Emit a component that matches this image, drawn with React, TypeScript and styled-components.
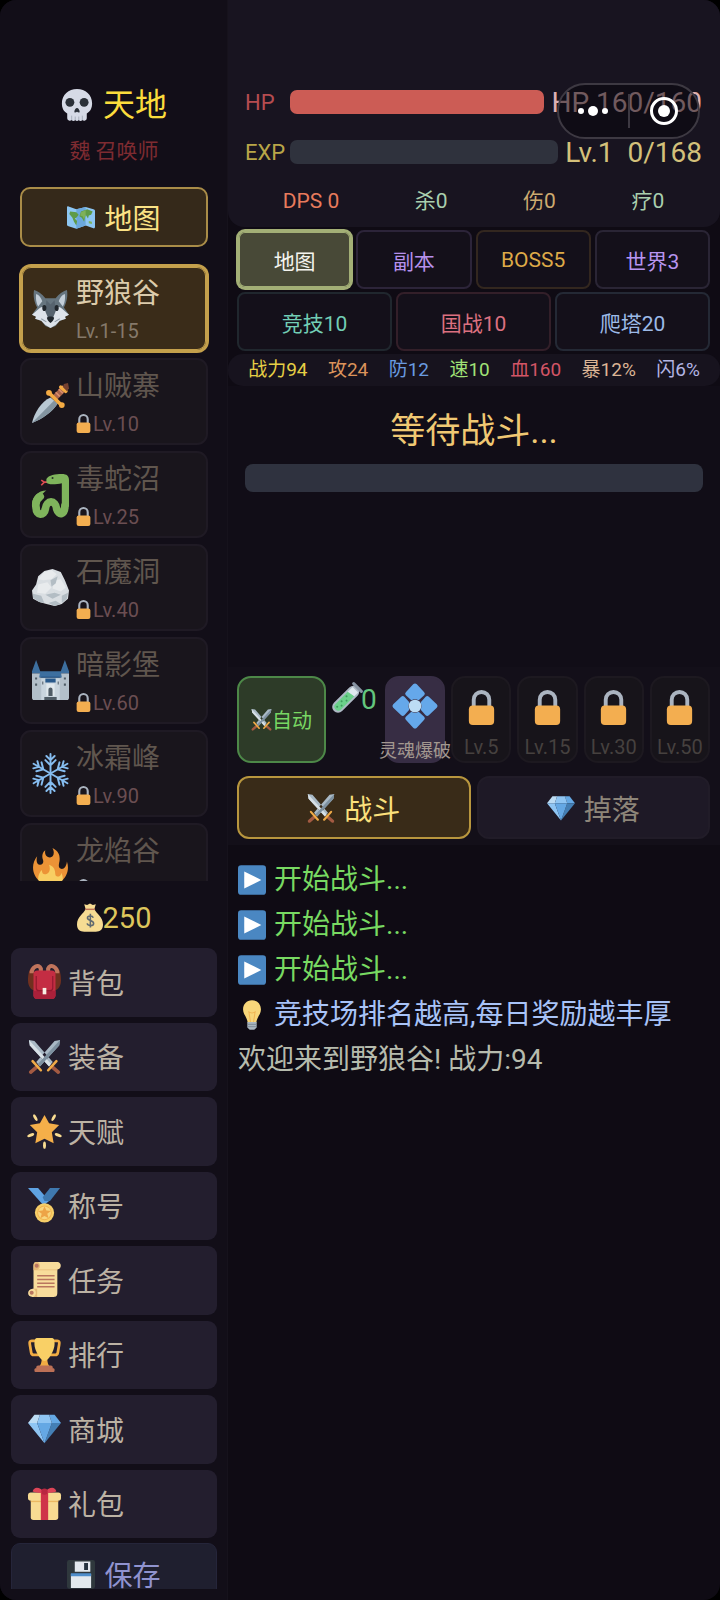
import React from 'react';
import styled, { createGlobalStyle, css } from 'styled-components';

const GlobalStyle = createGlobalStyle`
  * { box-sizing: border-box; }
  body {
    margin: 0;
    background: #000;
    font-family: Roboto, "Noto Sans CJK SC", sans-serif;
    font-weight: 400;
  }
  button {
    font: inherit;
    color: inherit;
    margin: 0;
    padding: 0;
    cursor: pointer;
  }
  h1, h2, p, ul { margin: 0; padding: 0; font-weight: 400; list-style: none; }
`;

/* ---------- icons ---------- */

const art = {
  skull: (
    <>
      <path fill="#d6dae6" d="M18 0C8.500 0 1 6.500 1 16c0 5 1.500 9 6 11.500V33a3 3 0 0 0 5 2c1 1.300 3 1.300 4 0 1 1.300 3 1.300 4 0 1 1.300 3 1.300 4 0a3 3 0 0 0 5-2v-5.500c4.500-2.500 6-6.500 6-11.500C35 6.500 27.500 0 18 0z" />
      <path stroke="#a4acb8" strokeWidth="1" d="M12 30v5M16 31v4M20 31v4M24 30v5" />
      <circle cx="10" cy="15" r="5" fill="#2b3038" />
      <circle cx="26" cy="15" r="5" fill="#2b3038" />
      <path fill="#2b3038" d="M15 25.500c0-1.500 1.500-4 3-4s3 2.500 3 4-2 1-3 0c-1 1-3 1.500-3 0z" />
    </>
  ),
  map: (
    <>
      <path fill="#8dc6f2" d="M0 6c0-1.500 1-2 2-1.500L12 8l12-3 10 3c1 .3 2 1 2 2v21c0 1-1 2-2 1.500L24 29l-12 4-10-3c-1-.3-2-1-2-2z" />
      <path fill="#6ba8dd" d="M12 8l12-3v24l-12 4z" />
      <path fill="#5f9b48" d="M4 11l8 1 3 3-3 4-2 1 3 3-1 6-3-5-2-5-4-5zm14 0l8-3 7 3-2 4-3 1-1 4-3-5-2 9-3-5-3-2z" />
      <path fill="#7eb15a" d="M18 12l6-3v6l-2 6-2-4-3-1zM28 23l4 1v3l-4-1z" />
    </>
  ),
  wolf: (
    <>
      <path fill="#66757f" d="M2 0c3 1 8 3.500 11 8h10c3-4.500 8-7 11-8 1 5 0 12-3 17l5 7-4 2 1 2-6 2-4 5-5 2-5-2-4-5-6-2 1-2-4-2 5-7C2 12 1 5 2 0z" />
      <path fill="#c3ced8" d="M4 4c3 1 5 4 6 7l-4 5C4 13 3.500 8 4 4zm28 0c-3 1-5 4-6 7l4 5c2-3 2.500-8 2-12z" />
      <path fill="#dde3ea" d="M7 18c4-3 8-1 9 4l2 6 2-6c1-5 5-7 9-4l7 6-4 2 1 2-6 2-4 4-5 3-5-3-4-4-6-2 1-2-4-2z" />
      <path fill="#56636e" d="M14 10l4 4 4-4 1 11-3 7h-4l-3-7z" />
      <ellipse cx="12" cy="17.500" rx="2" ry="3" fill="#20262c" />
      <ellipse cx="24" cy="17.500" rx="2" ry="3" fill="#20262c" />
      <path fill="#20262c" d="M14.500 27c1-1.500 6-1.500 7 0 0 2-2 4-3.500 5-1.500-1-3.500-3-3.500-5z" />
      <path stroke="#8e9aa5" d="M9 28l5 3M27 28l-5 3" />
    </>
  ),
  dagger: (
    <>
      <path fill="#b9c8d3" d="M18 14l7 6C20 28 10 35 0 39 2 29 9 18 18 14z" />
      <path fill="#8394a0" d="M25 20C20 28 10 35 0 39l21.500-22z" />
      <path stroke="#a6634b" strokeWidth="6" d="M22.500 14L32 4.500" />
      <path stroke="#d98e6d" strokeWidth="1.500" d="M23 9l4 4M26 6l4 4M29 3l4 4" />
      <path stroke="#f4ab43" strokeWidth="3.500" strokeLinecap="round" d="M16.500 9.500l12 12M28 4l5 4" />
      <circle cx="16.500" cy="9.500" r="2.800" fill="#f4ab43" />
      <circle cx="29" cy="21.500" r="2.800" fill="#f4ab43" />
      <path fill="#75412f" d="M31 1l4-1 1 5-2 3-4-4z" />
    </>
  ),
  snake: (
    <>
      <path stroke="#dd4b50" strokeWidth="1.600" fill="none" d="M16 6h-4l-3-2m3 2L9 9" />
      <path fill="#7fb45c" d="M14 3c2-4 9-5 15-5 5 0 7 2 7 6v26h-7V7c-5 1-14 2-15-1z" />
      <path fill="none" stroke="#7fb45c" strokeWidth="7.500" strokeLinecap="round" d="M32 29c0 9-6 10-8 3-1-9-10-9-11 0-1 7-9 7-9-1-1-5 1-9 4-11" />
      <path fill="#7fb45c" d="M0 28c0-8 6-14 14-14-4 3-6 5-6 9z" />
      <circle cx="20" cy="2" r="1" fill="#293328" />
    </>
  ),
  rock: (
    <>
      <path fill="#d9dee2" d="M12 2l8-2 8 3 4 8 4 10-1 8-6 5-7 2-8-2-7-2-6-3-1-8 4-6 2-8z" />
      <path fill="#e8ebed" d="M12 3l7-2 5 4-5 5-8 1-5-1zM6 15l9-2 4 5-6 6-8-1zm16-4l6-1 5 8-5 4-8-3z" />
      <path fill="#b3bdc4" d="M1 24l8 2 3 7-5-1-6-4zm12 1l9-2 6 2-8 4zm16 1l6-3-1 6-5 4zm-13 7l7-2 5 3-6 2zM18 11l7-4-2 7-4 3z" />
    </>
  ),
  castle: (
    <>
      <path fill="#b3c0ca" d="M0 11h8v4h20v-4h8v24c0 1-1 2-2 2H2c-1 0-2-1-2-2z" />
      <path fill="#c9d5de" d="M9 16h18v21H9z" />
      <path fill="#3d6f9f" d="M4-2l4 11v2H0V9zm28 0l4 11v2h-8V9zM8 9h20l1 6H7z" />
      <path fill="#28598b" d="M13 16h10v4H13zM9 14h18v1H9z" />
      <path fill="#e0e8ed" d="M14 21h8v12h-8z" />
      <path fill="#4f5c66" d="M16 33v-6c0-3 4-3 4 0v6zM3 15h2v2H3zm28 0h2v2h-2zM3 21h2v2H3zm28 0h2v2h-2zM10 19h1v3h-1zm15 0h1v3h-1zM12 34h12v3H12z" />
    </>
  ),
  snow: (
    <g stroke="#86bdf0" strokeWidth="1.900" strokeLinecap="round" fill="none">
      {[0, 60, 120, 180, 240, 300].map((a) => (
        <path key={a} transform={`rotate(${a} 18 18)`} d="M18 18V-1M18 5l-4-4M18 5l4-4M18 10l-5-5M18 10l5-5" />
      ))}
    </g>
  ),
  fire: (
    <>
      <path fill="#ec9336" d="M35 19c0-2.062-.367-4.039-1.040-5.868-.46 5.389-3.333 8.157-6.335 6.868-2.812-1.208-.917-5.917-.777-8.164.236-3.809-.012-8.169-6.931-11.794 2.875 5.500.333 8.917-2.333 9.125-2.958.231-5.667-2.542-4.667-7.042-3.238 2.386-3.332 6.402-2.333 9 1.042 2.708-.042 4.958-2.583 5.208-2.840.28-4.418-3.041-2.963-8.333C2.520 10.965 1 14.805 1 19c0 9.389 7.611 17 17 17s17-7.611 17-17z" />
      <path fill="#f8ce62" d="M28.394 23.999c.148 3.084-2.561 4.293-4.019 3.709-2.106-.843-1.541-2.291-2.083-5.291s-2.625-5.083-5.708-6c2.250 6.333-1.247 8.667-3.080 9.084-1.872.426-3.753-.001-3.968-4.007C7.352 23.668 6 26.676 6 30c0 .368.023.73.055 1.090C9.125 34.124 13.342 36 18 36s8.875-1.876 11.945-4.910c.032-.36.055-.722.055-1.090 0-2.187-.584-4.236-1.606-6.001z" />
    </>
  ),
  lock: (
    <>
      <path fill="none" stroke="#abb4c0" strokeWidth="4" d="M10 20V10a8 8 0 0 1 16 0v10" />
      <path fill="#f3ae50" d="M31 32a4 4 0 0 1-4 4H9a4 4 0 0 1-4-4V20a4 4 0 0 1 4-4h18a4 4 0 0 1 4 4z" />
    </>
  ),
  money: (
    <>
      <path fill="#f6dc93" d="M12 6h12c3 6 12 11 12 21 0 7-4 10-10 10H10c-6 0-10-3-10-10C0 17 9 12 12 6z" />
      <path fill="#f6dc93" d="M10-1l4 1 4-2 4 2 4-1-2 7H12z" />
      <path fill="#bd7358" d="M11 5h14v2H11z" />
      <path fill="none" stroke="#606a70" strokeWidth="2.200" d="M22.500 17.500c-1-3-8-3-8 .5 0 4 8.500 3 8.500 7.500 0 4-8 4-9 0M18.500 12v19" />
    </>
  ),
  backpack: (
    <>
      <path fill="#70301f" d="M5 2C1 4 0 11 0 17s3 10 7 11V9zm26 0c4 2 5 9 5 15s-3 10-7 11V9z" />
      <path fill="none" stroke="#c0745c" strokeWidth="4.500" d="M4 9c0-7 8-11 10-5v4M32 9c0-7-8-11-10-5v4" />
      <rect x="6" y="6" width="24" height="31" rx="4" fill="#c42d43" />
      <path fill="#a9203a" d="M6 28h24v5a4 4 0 0 1-4 4H10a4 4 0 0 1-4-4z" />
      <path fill="none" stroke="#93192f" strokeWidth="1.300" d="M9 12v13c0 2 1 3 3 3h12c2 0 3-1 3-3V12" />
      <rect x="16" y="25" width="4" height="7" fill="#f8efe5" />
    </>
  ),
  swords: (
    <>
      <path fill="#a9b9c5" d="M1 0l6 1 20 23-4 5L2 6zm34 0l-6 1L9 24l4 5L34 6z" />
      <path fill="#d7e0e6" d="M1 0l24 26-2 3L2 6z" />
      <path fill="#7d909f" d="M35 0L11 26l2 3L34 6z" />
      <path stroke="#a35a42" strokeWidth="4" strokeLinecap="round" d="M26 29l7 6M10 29l-7 6" />
      <path stroke="#f0ab48" strokeWidth="2.800" strokeLinecap="round" fill="none" d="M22 33l9-10M14 33l-9-10" />
    </>
  ),
  star: (
    <>
      <path fill="#f5af49" d="M18 1l5 9 11 2-8 8 2 12-10-5-10 5 2-12-8-8 11-2z" />
      <g fill="#f9dc91">
        <ellipse cx="8" cy="4" rx="1.600" ry="4" transform="rotate(-28 8 4)" />
        <ellipse cx="28" cy="4" rx="1.600" ry="4" transform="rotate(28 28 4)" />
        <ellipse cx="3" cy="23" rx="4" ry="1.700" transform="rotate(-22 3 23)" />
        <ellipse cx="33" cy="23" rx="4" ry="1.700" transform="rotate(22 33 23)" />
        <ellipse cx="18" cy="34" rx="1.600" ry="4" />
      </g>
    </>
  ),
  medal: (
    <>
      <path fill="#5fa3e3" d="M0-1h11l12 14-6 5z" />
      <path fill="#3f78ae" d="M24-1h11L24 13h-6l-2-4z" />
      <circle cx="18" cy="26" r="10.500" fill="#f6ce68" />
      <circle cx="18" cy="26" r="8" fill="#f1b24e" />
      <circle cx="18" cy="26" r="7" fill="#f8d67e" />
      <path fill="#eda447" d="M18 19l2 4.500 5 .5-4 3 1.500 5-4.500-2.500-4.500 2.500L15 27l-4-3 5-.5z" />
    </>
  ),
  scroll: (
    <>
      <path fill="#f8dc9b" d="M9-1h23c5 0 5 8 0 8v25c0 4-1 5-4 5H5c-7 0-6-9 0-9h1V3c0-3 1-4 3-4z" />
      <path fill="#e6b977" d="M10-1c4 1 4 8 0 8h22v1H6V3c0-3 2-4 4-4zM5 28c4 0 5 7 1 9h4v-9z" />
      <circle cx="9.500" cy="3" r="2.200" fill="#b9755f" />
      <circle cx="4" cy="32.500" r="2.200" fill="#b9755f" />
      <path stroke="#b9755f" strokeWidth="1.600" d="M10 14h19M10 18h19M10 22h19M10 26h19" />
    </>
  ),
  trophy: (
    <>
      <path fill="none" stroke="#f1ac43" strokeWidth="3" d="M10 3H4C2 3 1.500 4.500 2 7l1.500 9c.3 2 1.500 2.500 3 2.500h6M26 3h6c2 0 2.500 1.500 2 4l-1.500 9c-.3 2-1.500 2.500-3 2.500h-6" />
      <path fill="#f1ac43" d="M15 21h6c0 6 1 9 4 11H11c3-2 4-5 4-11z" />
      <path fill="#f9d066" d="M29 6.500C29 13 22.500 25 18 25S7 13 7 6.500C7 1 8.500 0 10 0h16c1.500 0 3 1 3 6.500z" />
      <path fill="#bc7056" d="M9 33v-1a2 2 0 0 1 2-2h14a2 2 0 0 1 2 2v1c1.500 0 2 .6 2 1.500S29 37 28 37H8c-1 0-1-1.600-1-2.500S7.500 33 9 33z" />
    </>
  ),
  gem: (
    <>
      <path fill="#bcdcf4" d="M13 3H7l-7 9h10z" />
      <path fill="#65a8e4" d="M36 12l-7-9h-6l3 9z" />
      <path fill="#447fb5" d="M26 12h10L18 34z" />
      <path fill="#8fc5f3" d="M10 12H0l18 22zm3-9l-3 9h16l-3-9z" />
      <path fill="#65a8e4" d="M18 34l-8-22h16z" />
    </>
  ),
  gift: (
    <>
      <rect x="3" y="13" width="30" height="23" rx="3" fill="#f8db92" />
      <rect x="0" y="6" width="36" height="9" rx="3" fill="#f8db92" />
      <path fill="#ecb962" d="M3 15h30v1.500H3z" />
      <path fill="#cf3349" d="M14 6h8v30h-8z" />
      <path fill="#dc4557" d="M18 6C14 1 7-2 5 5c3 1 8 2 13 1zm0 0c4-5 11-8 13-1-3 1-8 2-13 1z" />
      <circle cx="18" cy="5" r="3.500" fill="#b92740" />
    </>
  ),
  floppy: (
    <>
      <rect width="36" height="37" rx="3" fill="#2f383d" />
      <path fill="#e3e9ee" d="M10 2h20v13H10zM5 18h26v18H5z" />
      <path fill="#263440" d="M22 4h5v9h-5z" />
      <path fill="#4f8ecb" d="M5 17h26v4H5z" />
    </>
  ),
  tube: (
    <g transform="rotate(45 18 18)">
      <rect x="10.500" y="-3" width="15" height="43" rx="7.500" fill="#aeb9c5" />
      <path fill="#6bd08a" d="M13 8h10v24a5 5 0 0 1-10 0z" />
      <path fill="#dfe8ee" d="M13 1h10v7l-10 2z" />
      <rect x="9" y="-5" width="18" height="4" rx="2" fill="#8793a2" />
      <g fill="#3f9c5e">
        <circle cx="16" cy="15" r="1.300" />
        <circle cx="20" cy="19" r="1.300" />
        <circle cx="16" cy="24" r="1.300" />
        <circle cx="20" cy="28" r="1.300" />
        <circle cx="17" cy="33" r="1.300" />
      </g>
    </g>
  ),
  diamond: (
    <>
      <g fill="#65a8ea">
        {[0, 90, 180, 270].map((a) => (
          <path key={a} transform={`rotate(${a} 18 18)`} d="M16.500.200q1.500-1.400 3 0l6 6.500q1.200 1.300 0 2.600l-4.500 4q-3-1.500-6 0l-4.500-4q-1.200-1.300 0-2.600z" />
        ))}
      </g>
      <circle cx="18" cy="18" r="5.200" fill="#bcdcf4" />
    </>
  ),
  play: (
    <>
      <rect y="-1" width="36" height="38" rx="4" fill="#4a87c2" />
      <path fill="#fff" d="M8 7l22 11L8 29z" />
    </>
  ),
  bulb: (
    <>
      <path fill="#f8d77a" d="M18-1C11-1 6.500 4 6.500 11c0 6.500 5 9 6 17h11c1-8 6-10.500 6-17C29.500 4 25-1 18-1z" />
      <path fill="none" stroke="#f0b654" strokeWidth="1.300" d="M16 27l-2-13c3 2 5 2 8 0l-2 13" />
      <path fill="#abb7c0" d="M12 27h12v7l-3 3h-6l-3-3z" />
      <path stroke="#7c8994" strokeWidth="1.200" d="M12 30h12M12 33h11" />
    </>
  ),
};

type IconName = keyof typeof art;

const IconSvg = styled.svg<{ $size: number }>`
  display: block;
  flex: none;
  width: ${(p) => p.$size}px;
  height: ${(p) => p.$size}px;
  overflow: visible;
`;

const Icon = ({ name, size }: { name: IconName; size: number }) => (
  <IconSvg $size={size} viewBox="0 0 36 36" aria-hidden="true">
    {art[name]}
  </IconSvg>
);

/* ---------- shell ---------- */

const Shell = styled.div`
  display: flex;
  height: 100vh;
  min-height: 1200px;
  background: #0f0b14;
  border-radius: 16px;
  overflow: hidden;
`;

const Sidebar = styled.aside`
  flex: 0 0 228px;
  display: flex;
  flex-direction: column;
  padding: 80px 10px 11px 11px;
  background: #120e18;
  border-right: 1px solid #16121c;
`;

const Title = styled.h1`
  display: flex;
  justify-content: center;
  align-items: center;
  gap: 10px;
  font-size: 32px;
  line-height: 50px;
  color: #fbdc3c;
`;

const Role = styled.p`
  text-align: center;
  font-size: 21px;
  line-height: 42px;
  color: #7e2b31;
`;

const MapButton = styled.button`
  display: flex;
  justify-content: center;
  align-items: center;
  gap: 9px;
  height: 60px;
  margin: 15px 9px 18px;
  border: 2px solid #a98c48;
  border-radius: 10px;
  background: #35291a;
  color: #fbe285;
  font-size: 28px;
`;

const MapList = styled.ul`
  flex: 1;
  min-height: 0;
  display: flex;
  flex-direction: column;
  gap: 6px;
  overflow: hidden;
  margin-top: -2px;
  padding: 2px 9px 0;
`;

const MapCard = styled.button<{ $active?: boolean }>`
  display: flex;
  align-items: center;
  gap: 7px;
  width: 100%;
  height: 87px;
  padding: 0 10px;
  border: 2px solid #1f1a24;
  border-radius: 11px;
  background: #19151c;
  color: #60564e;
  text-align: left;
  ${(p) =>
    p.$active &&
    css`
      border-color: #c4a04c;
      background: #3a2c19;
      color: #dccbab;
      box-shadow: 0 0 0 1px #c4a04c, inset 0 0 0 1px #c4a04c;
    `}
`;

const MapName = styled.span`
  display: block;
  font-size: 28px;
  line-height: 44px;
`;

const MapLevel = styled.span<{ $active?: boolean }>`
  display: flex;
  align-items: center;
  margin-left: ${(p) => (p.$active ? 0 : -2)}px;
  font-size: 20px;
  line-height: 30px;
  color: ${(p) => (p.$active ? '#85796a' : '#6b4e52')};
`;

const Gold = styled.p`
  display: flex;
  justify-content: center;
  align-items: center;
  height: 67px;
  padding-top: 7px;
  font-size: 29px;
  color: #ddc65c;
`;

const Menu = styled.nav`
  display: grid;
  grid-auto-rows: 1fr;
  gap: 6px;
  height: 590px;
`;

const MenuButton = styled.button`
  display: flex;
  align-items: center;
  gap: 7px;
  padding: 0 17px 1px;
  border: 0;
  border-radius: 9px;
  background: #231e2e;
  color: #bcb2a4;
  font-size: 28px;
`;

const SaveArea = styled.div`
  height: 51px;
  padding-top: 5px;
  overflow: hidden;
`;

const SaveButton = styled.button`
  display: flex;
  justify-content: center;
  align-items: center;
  gap: 9px;
  width: 100%;
  height: 62px;
  border: 1px solid #25253a;
  border-radius: 9px;
  background: #1f1f2f;
  color: #9093cf;
  font-size: 28px;
`;

/* ---------- main column ---------- */

const Main = styled.main`
  flex: 1;
  min-width: 0;
  display: flex;
  flex-direction: column;
`;

const Header = styled.header`
  position: relative;
  display: flex;
  flex-direction: column;
  padding: 77px 18px 0 17px;
  height: 227px;
  border-radius: 0 0 16px 16px;
  background: #181420;
`;

const Meter = styled.div`
  display: flex;
  align-items: center;
  height: 50px;
`;

const MeterLabel = styled.span<{ $color: string }>`
  width: 45px;
  font-size: 22px;
  color: ${(p) => p.$color};
`;

const MeterTrack = styled.div<{ $color: string }>`
  flex: 1;
  height: 24px;
  border-radius: 7px;
  background: ${(p) => p.$color};
`;

const MeterValue = styled.span<{ $color: string }>`
  margin-left: 7px;
  font-size: 28px;
  white-space: pre;
  color: ${(p) => p.$color};
`;

const Spread = styled.div`
  display: flex;
  justify-content: space-around;
  font-size: 21px;
  line-height: 49px;
`;

const Tint = styled.span<{ $color: string }>`
  color: ${(p) => p.$color};
`;

const Capsule = styled.div`
  position: absolute;
  top: 83px;
  right: 20px;
  display: flex;
  align-items: center;
  width: 143px;
  height: 56px;
  border: 2px solid #3d3942;
  border-radius: 28px;
  background: rgba(5, 4, 9, 0.5);
`;

const CapsuleButton = styled.button`
  flex: 1;
  display: flex;
  justify-content: center;
  border: 0;
  background: none;

  & + & {
    border-left: 2px solid #3d3942;
    height: 34px;
    align-items: center;
  }
`;

const Tabs = styled.div`
  padding: 3px 10px 3px 9px;
  display: flex;
  flex-direction: column;
  gap: 3px;
`;

const TabRow = styled.div`
  display: flex;
  gap: 4px;
`;

const Tab = styled.button<{ $color: string; $edge: string; $active?: boolean }>`
  flex: 1;
  height: 59px;
  border: 2px solid ${(p) => p.$edge};
  border-radius: 8px;
  background: ${(p) => (p.$active ? '#484937' : '#14101a')};
  box-shadow: ${(p) => (p.$active ? `0 0 0 1px ${p.$edge}, inset 0 0 0 1px ${p.$edge}` : 'none')};
  color: ${(p) => p.$color};
  font-size: 21px;
`;

const StatStrip = styled.div`
  display: flex;
  justify-content: space-around;
  padding: 0 10px;
  border-radius: 15px;
  background: #17131e;
  font-size: 19px;
  line-height: 32px;
`;

const Arena = styled.section`
  display: flex;
  flex-direction: column;
  height: 281px;
  padding: 14px 17px 0;
  background: #110d17;
`;

const ArenaTitle = styled.h2`
  text-align: center;
  font-size: 35px;
  line-height: 64px;
  color: #f0c873;
`;

const EnemyTrack = styled.div`
  height: 28px;
  border-radius: 8px;
  background: #2f323f;
`;

const SkillBar = styled.section`
  display: flex;
  gap: 6px;
  padding: 9px 10px 7px 9px;
  background: #130f19;
`;

const AutoButton = styled.button`
  flex: 0 0 89px;
  display: flex;
  justify-content: center;
  align-items: center;
  height: 87px;
  border: 2px solid #4d8848;
  border-radius: 14px;
  background: #2d3b28;
  color: #78d763;
  font-size: 20px;
`;

const Potion = styled.button`
  flex: 0 0 47px;
  display: flex;
  align-items: center;
  gap: 1px;
  height: 46px;
  border: 0;
  background: none;
  color: #63c57d;
  font-size: 28px;
`;

const Slot = styled.button<{ $ready?: boolean }>`
  flex: 1 1 0;
  min-width: 0;
  display: flex;
  flex-direction: column;
  align-items: center;
  justify-content: space-between;
  height: 87px;
  padding: ${(p) => (p.$ready ? '6px 0 0' : '12px 0 0')};
  border: 2px solid ${(p) => (p.$ready ? '#372d44' : '#1d1920')};
  border-radius: 14px;
  background: ${(p) => (p.$ready ? '#372d44' : '#17141a')};
  color: ${(p) => (p.$ready ? '#a39890' : '#46413f')};
  font-size: ${(p) => (p.$ready ? 18 : 20)}px;
  line-height: ${(p) => (p.$ready ? 20 : 28)}px;
  white-space: nowrap;
`;

const PanelTabs = styled.div`
  display: flex;
  gap: 6px;
  padding: 6px 10px 6px 9px;
  background: #130f19;
`;

const PanelTab = styled.button<{ $active?: boolean }>`
  flex: 1;
  display: flex;
  justify-content: center;
  align-items: center;
  gap: 9px;
  height: 63px;
  border: 2px solid ${(p) => (p.$active ? '#b8963e' : '#211c28')};
  border-radius: 12px;
  background: ${(p) => (p.$active ? '#392b18' : '#1e1926')};
  color: ${(p) => (p.$active ? '#fbe07c' : '#8d8579')};
  font-size: 28px;
`;

const Log = styled.ul`
  padding: 12px 10px;
`;

const LogLine = styled.li<{ $color: string }>`
  display: flex;
  align-items: center;
  gap: 8px;
  font-size: 28px;
  line-height: 45px;
  color: ${(p) => p.$color};
`;

/* ---------- data ---------- */

const maps: { name: string; level: string; icon: IconName; active?: boolean }[] = [
  { name: '野狼谷', level: 'Lv.1-15', icon: 'wolf', active: true },
  { name: '山贼寨', level: 'Lv.10', icon: 'dagger' },
  { name: '毒蛇沼', level: 'Lv.25', icon: 'snake' },
  { name: '石魔洞', level: 'Lv.40', icon: 'rock' },
  { name: '暗影堡', level: 'Lv.60', icon: 'castle' },
  { name: '冰霜峰', level: 'Lv.90', icon: 'snow' },
  { name: '龙焰谷', level: '', icon: 'fire' },
];

const menu: [string, IconName][] = [
  ['背包', 'backpack'],
  ['装备', 'swords'],
  ['天赋', 'star'],
  ['称号', 'medal'],
  ['任务', 'scroll'],
  ['排行', 'trophy'],
  ['商城', 'gem'],
  ['礼包', 'gift'],
];

const modes = [
  [
    { label: '地图', color: '#f4f4ee', edge: '#a3af76', active: true },
    { label: '副本', color: '#b690ec', edge: '#2c2439' },
    { label: 'BOSS5', color: '#deaa48', edge: '#33271f' },
    { label: '世界3', color: '#b795f0', edge: '#2a2535' },
  ],
  [
    { label: '竞技10', color: '#72cdb5', edge: '#20272e' },
    { label: '国战10', color: '#dc7080', edge: '#331f29' },
    { label: '爬塔20', color: '#9cbae8', edge: '#242935' },
  ],
];

const tallies = [
  ['DPS 0', '#e87b5c'],
  ['杀0', '#a9cfae'],
  ['伤0', '#cdab70'],
  ['疗0', '#a9cfae'],
];

const stats = [
  ['战力94', '#e6cf45'],
  ['攻24', '#dc935b'],
  ['防12', '#699be0'],
  ['速10', '#a0e276'],
  ['血160', '#d35566'],
  ['暴12%', '#dcb595'],
  ['闪6%', '#b3b5e4'],
];

const log: { text: string; color: string; icon?: IconName }[] = [
  { text: '开始战斗...', color: '#78da62', icon: 'play' },
  { text: '开始战斗...', color: '#78da62', icon: 'play' },
  { text: '开始战斗...', color: '#78da62', icon: 'play' },
  { text: '竞技场排名越高,每日奖励越丰厚', color: '#a8c3f8', icon: 'bulb' },
  { text: '欢迎来到野狼谷! 战力:94', color: '#b6bbad' },
];

export default function App() {
  return (
    <>
      <GlobalStyle />
      <Shell>
        <Sidebar>
          <Title>
            <Icon name="skull" size={32} />
            天地
          </Title>
          <Role>魏 召唤师</Role>
          <MapButton>
            <Icon name="map" size={28} />
            地图
          </MapButton>
          <MapList>
            {maps.map((m) => (
              <li key={m.name}>
                <MapCard $active={m.active}>
                  <Icon name={m.icon} size={37} />
                  <span>
                    <MapName>{m.name}</MapName>
                    <MapLevel $active={m.active}>
                      {!m.active && <Icon name="lock" size={19} />}
                      {m.level || '\u00a0'}
                    </MapLevel>
                  </span>
                </MapCard>
              </li>
            ))}
          </MapList>
          <Gold>
            <Icon name="money" size={26} />
            250
          </Gold>
          <Menu>
            {menu.map(([label, icon]) => (
              <MenuButton key={label}>
                <Icon name={icon} size={33} />
                {label}
              </MenuButton>
            ))}
          </Menu>
          <SaveArea>
            <SaveButton>
              <Icon name="floppy" size={28} />
              保存
            </SaveButton>
          </SaveArea>
        </Sidebar>

        <Main>
          <Header>
            <Meter>
              <MeterLabel $color="#b54c50">HP</MeterLabel>
              <MeterTrack $color="#cc5c55" />
              <MeterValue $color="#dcb0b2">HP 160/160</MeterValue>
            </Meter>
            <Meter>
              <MeterLabel $color="#b8a648">EXP</MeterLabel>
              <MeterTrack $color="#2f323d" />
              <MeterValue $color="#d3c07a">{'Lv.1  0/168'}</MeterValue>
            </Meter>
            <Spread>
              {tallies.map(([label, color]) => (
                <Tint key={label} $color={color}>
                  {label}
                </Tint>
              ))}
            </Spread>
            <Capsule>
              <CapsuleButton aria-label="更多">
                <svg width="32" height="12" viewBox="0 0 32 12" fill="#fff">
                  <circle cx="4" cy="6" r="3" />
                  <circle cx="16" cy="6" r="5" />
                  <circle cx="28" cy="6" r="3" />
                </svg>
              </CapsuleButton>
              <CapsuleButton aria-label="关闭">
                <svg width="30" height="30" viewBox="0 0 30 30">
                  <circle cx="15" cy="15" r="12.500" fill="none" stroke="#fff" strokeWidth="3" />
                  <circle cx="15" cy="15" r="6" fill="#fff" />
                </svg>
              </CapsuleButton>
            </Capsule>
          </Header>

          <Tabs>
            {modes.map((row, i) => (
              <TabRow key={i}>
                {row.map((t) => (
                  <Tab key={t.label} $color={t.color} $edge={t.edge} $active={'active' in t}>
                    {t.label}
                  </Tab>
                ))}
              </TabRow>
            ))}
          </Tabs>

          <StatStrip>
            {stats.map(([label, color]) => (
              <Tint key={label} $color={color}>
                {label}
              </Tint>
            ))}
          </StatStrip>

          <Arena>
            <ArenaTitle>等待战斗...</ArenaTitle>
            <EnemyTrack />
          </Arena>

          <SkillBar>
            <AutoButton>
              <Icon name="swords" size={21} />
              自动
            </AutoButton>
            <Potion>
              <Icon name="tube" size={28} />0
            </Potion>
            <Slot $ready>
              <Icon name="diamond" size={44} />
              灵魂爆破
            </Slot>
            {['Lv.5', 'Lv.15', 'Lv.30', 'Lv.50'].map((level) => (
              <Slot key={level}>
                <Icon name="lock" size={35} />
                {level}
              </Slot>
            ))}
          </SkillBar>

          <PanelTabs>
            <PanelTab $active>
              <Icon name="swords" size={28} />
              战斗
            </PanelTab>
            <PanelTab>
              <Icon name="gem" size={28} />
              掉落
            </PanelTab>
          </PanelTabs>

          <Log>
            {log.map((line, i) => (
              <LogLine key={i} $color={line.color}>
                {line.icon && <Icon name={line.icon} size={28} />}
                {line.text}
              </LogLine>
            ))}
          </Log>
        </Main>
      </Shell>
    </>
  );
}
